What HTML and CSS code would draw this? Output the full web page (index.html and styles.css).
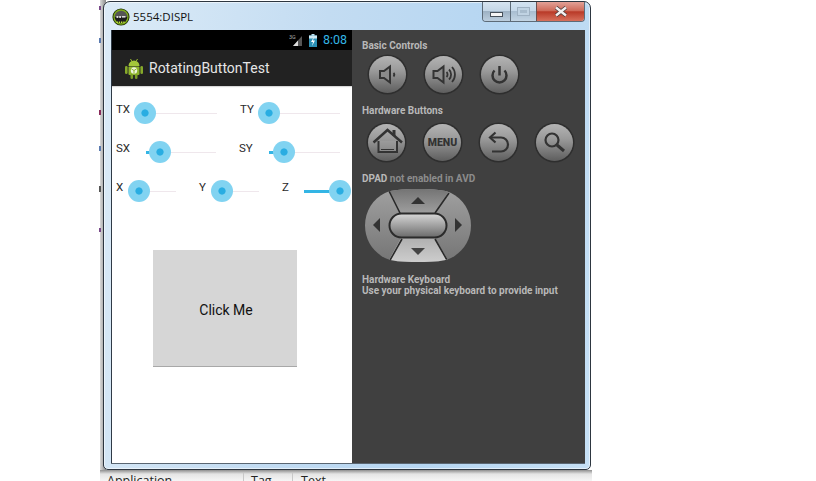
FILE: index.html
```html
<!DOCTYPE html>
<html lang="en">
<head>
<meta charset="utf-8">
<title>5554:DISPL</title>
<link rel="stylesheet" href="styles.css">
</head>
<body>
<div class="desktop">
  <div class="log-header">
    <span class="log-app">Application</span>
    <span class="log-tag">Tag</span>
    <span class="log-text">Text</span>
  </div>
  <div class="window">
    <div class="titlebar">
      <svg class="app-icon" width="18" height="18" viewBox="0 0 20 20">
        <circle cx="10" cy="10" r="9.500" fill="#1c2a08"/>
        <circle cx="10" cy="10" r="8.500" fill="#7fae1c"/>
        <path d="M3 10a7 7 0 0 1 14 0z" fill="#555"/>
        <path d="M3 10a7 7 0 0 0 14 0z" fill="#1e1e1e"/>
        <rect x="5" y="9" width="2" height="2" fill="#eee"/>
        <rect x="8" y="9" width="2" height="2" fill="#eee"/>
        <rect x="11" y="9" width="4" height="1.600" fill="#eee"/>
        <path d="M5 15.800h10" stroke="#c4ea3c" stroke-width="1.600" stroke-dasharray="1.500 1"/>
      </svg>
      <span class="win-title">5554:DISPL</span>
      <div class="win-controls">
        <div class="ctl ctl-min"><span class="min-glyph"></span></div>
        <div class="ctl ctl-max"><span class="max-glyph"></span></div>
        <div class="ctl ctl-close">
          <svg width="14" height="11" viewBox="0 0 14 11"><path d="M2 1.500l10 8M12 1.500l-10 8" stroke="#4a3a3a" stroke-width="4"/><path d="M2 1.500l10 8M12 1.500l-10 8" stroke="#f4f0f0" stroke-width="2.400"/></svg>
        </div>
      </div>
    </div>
    <div class="client">
      <div class="screen">
        <div class="statusbar">
          <svg class="sig" width="14" height="14" viewBox="0 0 14 14">
            <text x="0" y="5.500" class="sig-3g">3G</text>
            <path d="M4 13L13 3V13z" fill="#555"/>
            <path d="M4 13l5-5.500V13z" fill="#ddd"/>
          </svg>
          <svg class="batt" width="8" height="13" viewBox="0 0 8 13">
            <rect x="2.500" y="0" width="3" height="2" fill="#bfe6f5"/>
            <rect x="0" y="1.500" width="8" height="11.500" fill="#2a8fb5"/>
            <rect x="0" y="1.500" width="8" height="3" fill="#cfeaf4"/>
            <path d="M5 3L2 8h2l-1 4 3-5.500H4z" fill="#fff"/>
          </svg>
          <span class="clock">8:08</span>
        </div>
        <div class="actionbar">
          <svg class="droid" width="18" height="21" viewBox="0 0 18 21">
            <path d="M5.500 1l1.500 2.500M12.500 1l-1.500 2.500" stroke="#9dc02e" stroke-width="1"/>
            <path d="M3.500 8a5.500 5.500 0 0 1 11 0z" fill="#a4c63a"/>
            <rect x="3.500" y="8.500" width="11" height="8.500" rx="1" fill="#8fb52c"/>
            <rect x="0" y="8" width="2.600" height="8" rx="1.300" fill="#86a92a"/>
            <rect x="15.400" y="8" width="2.600" height="8" rx="1.300" fill="#86a92a"/>
            <rect x="5.500" y="16" width="2.600" height="5" rx="1.300" fill="#7b9c26"/>
            <rect x="9.900" y="16" width="2.600" height="5" rx="1.300" fill="#7b9c26"/>
            <circle cx="9" cy="12.500" r="3.200" fill="#eef3dc"/>
            <path d="M9 12.500V15.700M9 12.500L6.300 10.800M9 12.500l2.700-1.700" stroke="#8fb52c" stroke-width="1"/>
          </svg>
          <span class="app-title">RotatingButtonTest</span>
        </div>
        <div class="content">
          <div class="row">
            <div class="group"><span class="lbl lbl-18">TX</span><div class="slider w-83"><i class="thumb" style="left:11px"></i></div></div>
            <div class="group"><span class="lbl lbl-18">TY</span><div class="slider w-82"><i class="thumb" style="left:11px"></i></div></div>
          </div>
          <div class="row">
            <div class="group"><span class="lbl lbl-30">SX</span><div class="slider w-70"><b class="fill" style="width:14px"></b><i class="thumb" style="left:14px"></i></div></div>
            <div class="group"><span class="lbl lbl-30">SY</span><div class="slider w-71"><b class="fill" style="width:15px"></b><i class="thumb" style="left:15px"></i></div></div>
          </div>
          <div class="row">
            <div class="group"><span class="lbl lbl-12">X</span><div class="slider w-48"><i class="thumb" style="left:11px"></i></div></div>
            <div class="group"><span class="lbl lbl-12">Y</span><div class="slider w-48"><i class="thumb" style="left:11px"></i></div></div>
            <div class="group"><span class="lbl lbl-22">Z</span><div class="slider w-36"><b class="fill" style="width:36px"></b><i class="thumb" style="left:36px"></i></div></div>
          </div>
          <button class="click-me" type="button">Click Me</button>
        </div>
      </div>
      <div class="skin">
        <div class="cap cap-basic">Basic Controls</div>
        <div class="hw-row hw-row-basic">
          <div class="hw"><svg viewBox="0 0 37 37"><path d="M11 15h4l6-4.500v16L15 22h-4z" fill="#8a8a8a" stroke="#333" stroke-width="2"/><path d="M24.500 17a2.500 2.500 0 0 1 0 3.500" fill="none" stroke="#333" stroke-width="1.800"/></svg></div>
          <div class="hw"><svg viewBox="0 0 37 37"><path d="M8.500 15h4l6-4.500v16l-6-4.500h-4z" fill="#8a8a8a" stroke="#333" stroke-width="2"/><path d="M21.500 16a3.500 3.500 0 0 1 0 5M24 13.500a7 7 0 0 1 0 10M27 11a11 11 0 0 1 0 15" fill="none" stroke="#333" stroke-width="1.800"/></svg></div>
          <div class="hw"><svg viewBox="0 0 37 37"><path d="M13.500 14.500a7 7 0 1 0 10 0" fill="none" stroke="#333" stroke-width="2.500"/><path d="M18.500 10v9.500" stroke="#333" stroke-width="2.500"/></svg></div>
        </div>
        <div class="cap cap-hw">Hardware Buttons</div>
        <div class="hw-row hw-row-hw">
          <div class="hw"><svg viewBox="0 0 37 37"><path d="M10.500 17v11h18.500V17" fill="#aaa" fill-opacity=".35" stroke="#333" stroke-width="2"/><path d="M5.500 18.500L19.500 6 34 18.500" fill="none" stroke="#333" stroke-width="2.500"/><path d="M26 6v6" stroke="#333" stroke-width="3"/><path d="M13 25.500h13" stroke="#333" stroke-width="1"/></svg></div>
          <div class="hw"><span class="menu-word">MENU</span></div>
          <div class="hw"><svg viewBox="0 0 37 37"><path d="M15.500 8.500L10 13.500l5.500 5" fill="none" stroke="#333" stroke-width="2.200"/><path d="M10 13.500h11a7 7 0 0 1 0 14H12" fill="none" stroke="#333" stroke-width="2.200"/></svg></div>
          <div class="hw"><svg viewBox="0 0 37 37"><circle cx="16" cy="16" r="6.500" fill="none" stroke="#333" stroke-width="2.200"/><path d="M21 21l7 6" stroke="#333" stroke-width="3"/></svg></div>
        </div>
        <div class="cap cap-dpad">DPAD <span class="dim">not enabled in AVD</span></div>
        <svg class="dpad" width="106" height="73" viewBox="0 0 106 73">
          <defs>
            <linearGradient id="gs" x1="0" y1="0" x2="0" y2="1"><stop offset="0" stop-color="#a0a0a0"/><stop offset="1" stop-color="#757575"/></linearGradient>
            <linearGradient id="gt" x1="0" y1="0" x2="0" y2="1"><stop offset="0" stop-color="#747474"/><stop offset="1" stop-color="#a0a0a0"/></linearGradient>
            <linearGradient id="gb" x1="0" y1="0" x2="0" y2="1"><stop offset="0" stop-color="#b0b0b0"/><stop offset="1" stop-color="#cdcdcd"/></linearGradient>
            <linearGradient id="gp" x1="0" y1="0" x2="0" y2="1"><stop offset="0" stop-color="#d8d8d8"/><stop offset="1" stop-color="#6a6a6a"/></linearGradient>
            <clipPath id="body"><path d="M53 0C70 0 80 1 86 4 98 10 106 22 106 36.500 106 51 98 63 86 69 80 72 70 73 53 73 36 73 26 72 20 69 8 63 0 51 0 36.500 0 22 8 10 20 4 26 1 36 0 53 0z"/></clipPath>
          </defs>
          <g clip-path="url(#body)">
            <rect width="106" height="73" fill="url(#gs)"/>
            <path d="M23 0H85L70 25H36z" fill="url(#gt)"/>
            <path d="M36 49H70L84 73H23z" fill="url(#gb)"/>
            <path d="M24 2L36 26M84 4L70 24M37 50L24 73M70 50L82 71" stroke="#2b2b2b" stroke-width="1.600" fill="none"/>
          </g>
          <rect x="24.500" y="24.500" width="57" height="24" rx="12" fill="url(#gp)" stroke="#2b2b2b" stroke-width="2"/>
          <path d="M46 15l7-7 7 7z" fill="#333"/>
          <path d="M46 59h14l-7 7z" fill="#444"/>
          <path d="M15 29v14l-7-7z" fill="#333"/>
          <path d="M90 29v14l7-7z" fill="#333"/>
        </svg>
        <div class="cap cap-kbd">Hardware Keyboard<br>Use your physical keyboard to provide input</div>
      </div>
    </div>
  </div>
</div>
</body>
</html>
```

FILE: styles.css
```css
html, body {
  margin: 0;
  padding: 0;
  width: 816px;
  height: 481px;
  overflow: hidden;
  background: #fff;
}
.desktop {
  position: relative;
  width: 816px;
  height: 481px;
  overflow: hidden;
}
.desktop::before {
  content: "";
  position: absolute;
  left: 100px;
  top: 0;
  width: 6px;
  height: 470px;
  background: linear-gradient(90deg, #d9d9d9, #8a8a8a);
}
.desktop::after {
  content: "";
  position: absolute;
  left: 99px;
  top: 0;
  width: 2px;
  height: 470px;
  background:
    linear-gradient(#7a4a8a, #7a4a8a) 0 6px / 2px 4px no-repeat,
    linear-gradient(#5a7ab0, #5a7ab0) 0 38px / 2px 5px no-repeat,
    linear-gradient(#8a2a5a, #8a2a5a) 0 110px / 2px 5px no-repeat,
    linear-gradient(#5a7ab0, #5a7ab0) 0 146px / 2px 5px no-repeat,
    linear-gradient(#555, #555) 0 186px / 2px 6px no-repeat,
    linear-gradient(#7a4a8a, #7a4a8a) 0 228px / 2px 4px no-repeat;
}
.log-header {
  position: absolute;
  left: 100px;
  top: 470px;
  width: 492px;
  height: 11px;
  overflow: hidden;
  background: linear-gradient(#8f8f8f 0, #e4e4e4 4px, #f6f6f6 100%);
  font: 12.500px/15px "Open Sans", "Liberation Sans", sans-serif;
  color: #222;
}
.log-header span {
  position: absolute;
  top: 3px;
}
.log-app { left: 7px; }
.log-tag {
  left: 143px;
  padding-left: 7px;
  border-left: 1px solid #c8c8c8;
}
.log-text {
  left: 192px;
  padding-left: 8px;
  border-left: 1px solid #c8c8c8;
}
.window {
  position: absolute;
  left: 103px;
  top: 1px;
  width: 488px;
  height: 469px;
  box-sizing: border-box;
  padding: 0 5px 6px 7px;
  display: flex;
  flex-direction: column;
  border: 1px solid #2d3640;
  border-radius: 7px 7px 5px 5px;
  background: linear-gradient(100deg, #dcebf7 0, #c3dcf2 40%, #b6d6f2 70%, #c6e0f5 100%);
  box-shadow: inset 0 0 0 1px rgba(255, 255, 255, .55);
}
.titlebar {
  height: 28px;
  flex: none;
  display: flex;
  align-items: flex-start;
}
.app-icon {
  margin: 6px 0 0 1px;
}
.win-title {
  margin: 5px 0 0 3px;
  font: 11.500px/20px "Open Sans", "Liberation Sans", sans-serif;
  color: #111;
}
.win-controls {
  display: flex;
  margin-left: auto;
  height: 19px;
  border: 1px solid #5d6b78;
  border-top: 0;
  border-radius: 0 0 4px 4px;
  overflow: hidden;
}
.ctl {
  display: flex;
  align-items: center;
  justify-content: center;
  box-sizing: border-box;
}
.ctl-min {
  width: 28px;
  background: linear-gradient(#d6e4f0, #c4d6e6 45%, #9eb2c4 50%, #bccede);
  border-right: 1px solid #5d6b78;
}
.min-glyph {
  display: block;
  width: 11px;
  height: 3px;
  margin-top: 5px;
  background: #f6f6f6;
  border: 1px solid #46505a;
}
.ctl-max {
  width: 26px;
  background: linear-gradient(#d3e3f1, #c6d9ea 45%, #a9bed1 50%, #c3d5e4);
  border-right: 1px solid #6a5050;
}
.max-glyph {
  display: block;
  width: 11px;
  height: 7px;
  border: 1px solid #9fb2c3;
  box-shadow: inset 0 0 0 2px #c0d3e3;
  background: #a8bccd;
}
.ctl-close {
  width: 47px;
  background: linear-gradient(#e2a197, #cf6b5a 45%, #b93a28 52%, #d7705c);
}
.client {
  flex: 1;
  display: flex;
  min-height: 0;
  box-shadow: 0 1px 0 #5a6672;
}
.screen {
  width: 241px;
  box-sizing: border-box;
  border-left: 1px solid #2f3a46;
  flex: none;
  display: flex;
  flex-direction: column;
  background: #fff;
}
.statusbar {
  height: 20px;
  flex: none;
  background: #000;
  display: flex;
  align-items: center;
  justify-content: flex-end;
  padding-right: 5px;
}
.sig {
  margin-right: 6px;
}
.sig-3g {
  font: 5.500px "Roboto", sans-serif;
  fill: #aaa;
}
.batt {
  margin-right: 6px;
}
.clock {
  font: 12.500px/20px "Roboto", sans-serif;
  color: #33b5e5;
}
.actionbar {
  height: 36px;
  flex: none;
  background: #222;
  display: flex;
  align-items: center;
  padding-left: 13px;
  box-shadow: 0 1px 1px rgba(0, 0, 0, .15);
}
.droid {
  margin-right: 6px;
}
.app-title {
  font: 14px/20px "Roboto", sans-serif;
  color: #e6e6e6;
}
.content {
  flex: 1;
  padding-top: 8px;
}
.row {
  display: flex;
  height: 39px;
  padding-left: 4px;
  gap: 23px;
}
.group {
  display: flex;
  align-items: center;
}
.lbl {
  flex: none;
  font: 11.500px/14px "Roboto", sans-serif;
  color: #2a2a2a;
  margin-top: -9px;
}
.lbl-12 { width: 12px; }
.lbl-18 { width: 18px; }
.lbl-22 { width: 22px; }
.lbl-30 { width: 30px; }
.slider {
  position: relative;
  height: 1px;
  background: #efe7ec;
  flex: none;
}
.w-36 { width: 36px; }
.w-48 { width: 48px; }
.w-70 { width: 70px; }
.w-71 { width: 71px; }
.w-82 { width: 82px; }
.w-83 { width: 83px; }
.fill {
  position: absolute;
  left: 0;
  top: -1px;
  height: 3px;
  background: #33b5e5;
}
.thumb {
  position: absolute;
  top: 0;
  width: 22px;
  height: 22px;
  margin: -11px 0 0 -11px;
  border-radius: 50%;
  background: radial-gradient(circle, #29ade2 0, #29ade2 3.200px, #81d3f1 4px);
}
.click-me {
  display: block;
  width: 144px;
  height: 117px;
  margin: 39px 0 0 41px;
  padding: 4px 0 0 2px;
  border: 0;
  border-bottom: 1px solid #a8a8a8;
  background: #d6d6d6;
  font: 14px/20px "Roboto", sans-serif;
  color: #111;
}
.skin {
  flex: 1;
  background: #404040;
  padding-left: 10px;
  color: #bdbdbd;
}
.cap {
  font: 700 10px/11px "Roboto", sans-serif;
  color: #b8b8b8;
}
.dim {
  color: #8c8c8c;
}
.cap-basic { margin-top: 10px; }
.cap-hw { margin-top: 12px; }
.cap-dpad { margin-top: 12px; }
.cap-kbd { margin-top: 12px; }
.hw-row {
  display: flex;
  gap: 19px;
}
.hw-row-basic {
  margin: 5px 0 0 7px;
}
.hw-row-hw {
  margin: 8px 0 0 6px;
}
.hw {
  width: 37px;
  height: 37px;
  border-radius: 50%;
  flex: none;
  display: flex;
  align-items: center;
  justify-content: center;
  background: linear-gradient(#b4b4b4, #9a9a9a 40%, #5e5e5e);
  box-shadow: 0 0 0 1.500px #2e2e2e;
}
.hw svg {
  width: 37px;
  height: 37px;
  display: block;
}
.menu-word {
  font: 900 10.500px/12px "Roboto", sans-serif;
  color: #333;
}
.dpad {
  display: block;
  margin: 5px 0 0 3px;
}
```
